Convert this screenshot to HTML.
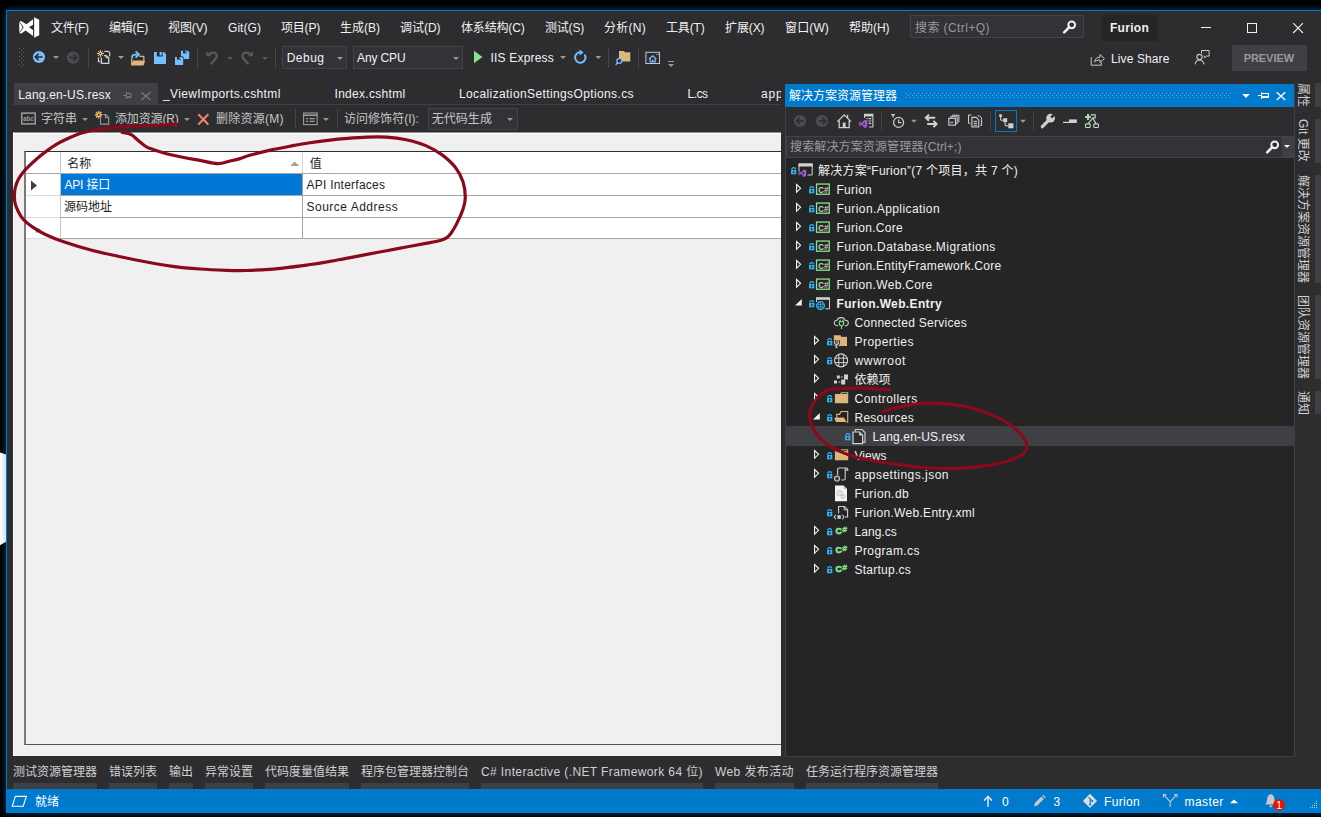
<!DOCTYPE html>
<html><head><meta charset="utf-8"><title>Furion - Microsoft Visual Studio</title>
<style>
*{box-sizing:border-box;margin:0;padding:0}
html,body{width:1321px;height:817px;overflow:hidden;background:#000}
body{position:relative;font-family:"Liberation Sans","Noto Sans CJK SC",sans-serif;font-size:12px;color:#f1f1f1;}
.a{position:absolute}
.t{position:absolute;white-space:nowrap;line-height:16px;height:16px}
.dim{color:#999}
.dark{color:#1e1e1e}
.b{font-weight:bold}
svg{position:absolute;overflow:visible}
#win{position:absolute;left:6px;top:10px;width:1330px;height:803px;background:#2d2d30;border:1px solid #007acc;box-shadow:0 0 7px 0 rgba(0,122,204,.5)}
.sep{position:absolute;width:1px;background:#46464a}
.combo{position:absolute;background:#333337;border:1px solid #434346}
.arr{position:absolute;width:0;height:0;border-left:3px solid transparent;border-right:3px solid transparent;border-top:3px solid #999}
.vt{position:absolute;left:1294.5px;width:16px;writing-mode:vertical-rl;text-orientation:sideways;white-space:nowrap;line-height:16px;color:#d0d0d0}
.vb{position:absolute;left:1315px;width:6px;background:#3f3f46}
.bb{position:absolute;top:783px;height:6px;background:#3f3f46}
</style></head>
<body>
<div id="win"></div>
<div class="a" style="left:0;top:452px;width:6px;height:94px;background:linear-gradient(90deg,#fdfeff,#eaf3fa 50%,#c9e1f3);clip-path:polygon(0 0.5px,100% 2.6px,100% 89.7px,0 93.2px)"></div>
<svg style="left:18.7px;top:16.6px" width="20.8" height="20.8" viewBox="0 0 20.8 20.8"><path fill="#fff" d="M2.1 4 L7.4 7.35 L14.05 2.2 V7.7 L10 10.3 L14.05 13 V18.9 L6.7 13.6 L2.3 16.5 L1 16.2 L0.26 14.15 V6.4 L0.8 4.6 Z M15.15 0.2 L20.2 2.75 V18.2 L15.15 20.8 Z"/><path fill="none" stroke="#2d2d30" stroke-width=".8" d="M1.2 5.6 L4 10.25 L1.2 14.9"/><path fill="#2d2d30" opacity=".6" d="M3.3 8.6 L4.6 10.25 L3.3 11.9 Z"/></svg>
<span class="t" style="left:51px;top:19.5px;letter-spacing:-0.326px;">文件(F)</span>
<span class="t" style="left:109px;top:19.5px;letter-spacing:-0.200px;">编辑(E)</span>
<span class="t" style="left:168px;top:19.5px;letter-spacing:-0.100px;">视图(V)</span>
<span class="t" style="left:228px;top:19.5px;letter-spacing:0.055px;">Git(G)</span>
<span class="t" style="left:281px;top:19.5px;letter-spacing:-0.200px;">项目(P)</span>
<span class="t" style="left:340px;top:19.5px;">生成(B)</span>
<span class="t" style="left:400px;top:19.5px;letter-spacing:-0.034px;">调试(D)</span>
<span class="t" style="left:461px;top:19.5px;letter-spacing:-0.167px;">体系结构(C)</span>
<span class="t" style="left:545px;top:19.5px;letter-spacing:-0.200px;">测试(S)</span>
<span class="t" style="left:604px;top:19.5px;letter-spacing:0.266px;">分析(N)</span>
<span class="t" style="left:666px;top:19.5px;letter-spacing:-0.166px;">工具(T)</span>
<span class="t" style="left:725px;top:19.5px;letter-spacing:-0.100px;">扩展(X)</span>
<span class="t" style="left:785px;top:19.5px;letter-spacing:0.134px;">窗口(W)</span>
<span class="t" style="left:849px;top:19.5px;letter-spacing:-0.034px;">帮助(H)</span>
<div class="combo" style="left:910px;top:15px;width:174px;height:23px;background:#333337;border-color:#434346"></div>
<span class="t dim" style="left:915px;top:19.5px;letter-spacing:0.423px;">搜索 (Ctrl+Q)</span>
<svg style="left:1062.6px;top:20.2px" width="13.5" height="13.5" viewBox="0 0 13.5 13.5"><circle cx="8.7" cy="4.8" r="3.4" fill="none" stroke="#f1f1f1" stroke-width="2"/><path d="M6.3 7.2 L1.2 12.3" stroke="#f1f1f1" stroke-width="2.6" stroke-linecap="round"/></svg>
<div class="a" style="left:1102px;top:15px;width:56px;height:26px;background:#252526"></div>
<span class="t b" style="left:1110px;top:19.5px;letter-spacing:0.279px;">Furion</span>
<svg style="left:1195px;top:18px" width="115" height="20" viewBox="0 0 115 20"><path d="M6 9.5 h10" stroke="#f1f1f1" stroke-width="1" fill="none"/><rect x="52.5" y="5.5" width="9" height="9" stroke="#f1f1f1" stroke-width="1" fill="none"/><path d="M98.2 5.2 L108 15 M108 5.2 L98.2 15" stroke="#f1f1f1" stroke-width="1.1" fill="none"/></svg>
<svg style="left:19px;top:48px" width="5" height="20" viewBox="0 0 5 20"><g fill="#5c5c61"><rect x="0" y="0" width="1" height="1"/><rect x="4" y="0" width="1" height="1"/><rect x="2" y="2" width="1" height="1"/><rect x="0" y="4" width="1" height="1"/><rect x="4" y="4" width="1" height="1"/><rect x="2" y="6" width="1" height="1"/><rect x="0" y="8" width="1" height="1"/><rect x="4" y="8" width="1" height="1"/><rect x="2" y="10" width="1" height="1"/><rect x="0" y="12" width="1" height="1"/><rect x="4" y="12" width="1" height="1"/><rect x="2" y="14" width="1" height="1"/><rect x="0" y="16" width="1" height="1"/><rect x="4" y="16" width="1" height="1"/><rect x="2" y="18" width="1" height="1"/></g></svg><svg style="left:0px;top:0px" width="1321" height="80" viewBox="0 0 1321 80"><circle cx="39" cy="57" r="6.1" fill="#75beff"/><path d="M35.2 57 h7.4 M38.6 53.8 L35.3 57 L38.6 60.2" stroke="#2d2d30" stroke-width="1.7" fill="none"/><path d="M53 56 h6 l-3 3 z" fill="#999"/><circle cx="73" cy="57.6" r="6.1" fill="#4d4d51"/><path d="M69.4 57.6 h7.4 M73.4 54.4 L76.7 57.6 L73.4 60.8" stroke="#2d2d30" stroke-width="1.7" fill="none"/><path d="M88.5 47 v21 M197.5 47 v21 M275.5 47 v21 M608.5 47 v21 M638.5 47 v21" stroke="#46464a" stroke-width="1"/><path d="M104.3 51.4 H108.3 L109.7 52.8 V56.2" stroke="#d0d0d0" stroke-width="1.2" fill="none"/><path d="M101.4 57.4 V63.4 H108.7 V57.6 L106.1 55.7 H104" stroke="#d0d0d0" stroke-width="1.3" fill="#2d2d30"/><path d="M106 55.800 V57.800 H108.600" stroke="#d0d0d0" stroke-width="1" fill="none"/><path d="M98.5 57.2 V61.6 H100.2" stroke="#d0d0d0" stroke-width="1.2" fill="none"/><g stroke="#f5cf8a" stroke-width="1"><path d="M100.4 49.9 v7.2 M96.800 53.5 h7.200 M97.900 51 l5 5 M102.900 51 l-5 5"/></g><circle cx="100.4" cy="53.5" r="1.600" fill="#f5cf8a"/><circle cx="100.4" cy="53.5" r=".800" fill="#2d2d30"/><path d="M118 56 h6 l-3 3 z" fill="#a0a0a0"/><path d="M139.400 56.400 h4.400 v4" stroke="#dcb67a" stroke-width="1.2" fill="none"/><path d="M131.700 59 V65" stroke="#dcb67a" stroke-width="1.300"/><path d="M133 60.600 H145.200 L143.500 65.500 H131.100 Z" fill="#dcb67a"/><path d="M132.600 58.600 c-1.600 -2.600 0 -3.900 3.400 -3.900 h2.400" stroke="#75beff" stroke-width="1.800" fill="none"/><path d="M135.600 51.300 l3.500 3.200 l-3.500 3.200" stroke="#75beff" stroke-width="1.800" fill="none"/><path d="M154 52 h10 l2 2 v10 h-12 z" fill="#75beff"/><rect x="156.800" y="51.500" width="5.900" height="5" fill="#2d2d30"/><rect x="159.600" y="52" width="2.200" height="3.400" fill="#75beff"/><path d="M181 50.8 h7 l1.2 1.2 v7 h-8.2 z" fill="#75beff"/><rect x="183" y="50.8" width="3.6" height="2.6" fill="#2d2d30"/><rect x="185.4" y="50.8" width="1.2" height="1.8" fill="#75beff"/><path d="M174.2 56.2 h8.2 l1.4 1.4 v8.2 h-9.6 z" fill="#2d2d30"/><path d="M175 57 h7 l1.2 1.2 v6.8 h-8.2 z" fill="#75beff"/><rect x="177" y="57" width="3.6" height="2.6" fill="#2d2d30"/><rect x="179.4" y="57" width="1.2" height="1.8" fill="#75beff"/><path d="M206.2 51 v5.2 h5.2 z" fill="#59595d"/><path d="M208 55.5 c2.5 -3.5 7 -3.8 8.6 -1 c1.2 2.2 -0.3 4.2 -6 9.8" stroke="#59595d" stroke-width="2.2" fill="none"/><path d="M227 57 h6 l-3 3 z" fill="#59595d"/><path d="M253 51 v5.2 h-5.2 z" fill="#59595d"/><path d="M251.2 55.5 c-2.5 -3.5 -7 -3.8 -8.6 -1 c-1.2 2.2 0.3 4.2 6 9.8" stroke="#59595d" stroke-width="2.2" fill="none"/><path d="M262 57 h6 l-3 3 z" fill="#59595d"/><path d="M474 50.8 L482.4 57 L474 63.2 z" fill="#8ae28a"/><path d="M560 56 h6 l-3 3 z" fill="#999"/><path d="M584.6 54.6 a5.2 5.2 0 1 1 -4.2 -2.3" stroke="#75beff" stroke-width="2" fill="none"/><path d="M579.6 49.4 l4 3 l-4 3 z" fill="#75beff"/><path d="M595.3 56 h6 l-3 3 z" fill="#999"/><path d="M619 51 h5 l1 1.2 h5.3 v9.3 h-11.3 z" fill="#dcb67a"/><circle cx="619.4" cy="60.8" r="2.5" fill="#2d2d30" stroke="#75beff" stroke-width="1.3"/><path d="M617.6 62.8 l-1.9 2" stroke="#75beff" stroke-width="1.5"/><rect x="645.9" y="52.3" width="13.6" height="11.2" fill="none" stroke="#c8c8c8" stroke-width="1"/><path d="M656.3 54.5 h.9 M657.8 54.5 h.9" stroke="#c8c8c8" stroke-width="1"/><path d="M649 59 l3.7 -3.3 l3.7 3.3 M650.2 58.6 v3.2 h5 v-3.2" stroke="#75beff" stroke-width="1.2" fill="none"/><rect x="652" y="59.6" width="1.4" height="2.2" fill="#75beff"/><path d="M668 61.5 h6" stroke="#999" stroke-width="1"/><path d="M668 64 h6 l-3 3 z" fill="#999"/><path d="M1091.2 57.2 v8 h10.2 v-2.4" stroke="#c8c8c8" stroke-width="1" fill="none"/><path d="M1094.6 62 c.4 -3.2 2.2 -4.8 5.4 -4.8 v-2.6 l4.4 4 l-4.4 4 v-2.6 c-2.4 0 -4 .4 -5.4 2 z" stroke="#c8c8c8" stroke-width="1" fill="none"/><circle cx="1199.5" cy="57" r="2.6" stroke="#c8c8c8" stroke-width="1.1" fill="none"/><path d="M1195 64.4 c.6 -3.2 2.2 -4.4 4.5 -4.4 s3.9 1.2 4.5 4.4" stroke="#c8c8c8" stroke-width="1.1" fill="none"/><path d="M1201.5 53.4 v-2.9 h7.6 v5.6 h-2.6 l-1.8 1.8 v-1.8 h-1" stroke="#c8c8c8" stroke-width="1" fill="none"/></svg>
<div class="combo" style="left:282px;top:46px;width:65px;height:23px"></div>
<span class="t" style="left:286.7px;top:50px;letter-spacing:0.485px;">Debug</span>
<div class="arr" style="left:337px;top:57px;border-top-color:#999"></div>
<div class="combo" style="left:353px;top:46px;width:110px;height:23px"></div>
<span class="t" style="left:357px;top:50px;letter-spacing:-0.123px;">Any CPU</span>
<div class="arr" style="left:453px;top:57px;border-top-color:#999"></div>
<span class="t" style="left:490.5px;top:50px;letter-spacing:0.195px;">IIS Express</span>
<span class="t" style="left:1111px;top:51px;letter-spacing:0.113px;">Live Share</span>
<div class="a" style="left:1232px;top:45px;width:75px;height:26px;background:#3f3f46"></div>
<span class="t b" style="left:1243.7px;top:50px;font-size:11px;letter-spacing:-0.062px;color:#9a9a9c">PREVIEW</span>
<div class="a" style="left:14px;top:83px;width:144px;height:22px;background:#3f3f46"></div>
<div class="a" style="left:13px;top:104px;width:768px;height:1px;background:#3f3f46"></div>
<span class="t" style="left:18.25px;top:86.5px;letter-spacing:0.177px;">Lang.en-US.resx</span>
<svg style="left:120px;top:88px" width="34" height="16" viewBox="0 0 34 16"><path d="M3 7.4 h3.400 M6.400 4 v7 M6.400 5.300 h4.500 v4.300 h-4.500 M6.400 8.800 h4.500" stroke="#7a7a7e" stroke-width="1" fill="none"/><path d="M21.300 4.200 L30.600 12 M30.600 4.200 L21.300 12" stroke="#7a7a7e" stroke-width="1.2" fill="none"/></svg>
<span class="t" style="left:163px;top:86px;letter-spacing:0.380px;">_ViewImports.cshtml</span>
<span class="t" style="left:334.5px;top:86px;letter-spacing:0.303px;">Index.cshtml</span>
<span class="t" style="left:459px;top:86px;letter-spacing:0.385px;">LocalizationSettingsOptions.cs</span>
<span class="t" style="left:687.5px;top:86px;letter-spacing:-0.504px;">L.cs</span>
<div class="a" style="left:761px;top:84px;width:20px;height:20px;overflow:hidden"><span class="t" style="left:0px;top:2px;letter-spacing:0.823px;">app</span></div>
<svg style="left:0px;top:0px" width="400" height="140" viewBox="0 0 400 140"><rect x="21.800" y="113.100" width="13.400" height="10.800" fill="none" stroke="#a4a4a4" stroke-width="1.400"/><text x="23.2" y="121.4" font-size="6.3" font-weight="bold" fill="#9a9a9a" font-family="Liberation Sans,sans-serif" textLength="10.6" lengthAdjust="spacingAndGlyphs">abc</text><g stroke="#f0b862" stroke-width="1.4"><path d="M98.7 110.9 v7.6 M94.9 114.7 h7.6 M96 112 l5.4 5.4 M101.4 112 l-5.4 5.4"/></g><circle cx="98.7" cy="114.7" r="1" fill="#2d2d30"/><path d="M100.5 118.3 v5.8 h8.2 v-6.6 l-3 -3 h-2.2 M105.4 114.8 v3 h3" stroke="#9a9a9a" stroke-width="1.1" fill="none"/><path d="M198.3 114.3 L208.3 124.6 M208.3 114.3 L198.3 124.6" stroke="#f2826c" stroke-width="2.1" fill="none"/><rect x="303.6" y="113" width="13.6" height="11.6" fill="none" stroke="#9c9c9c" stroke-width="1.1"/><path d="M303.6 115.2 h13.6" stroke="#9c9c9c" stroke-width="1.6"/><path d="M306 118.6 h2 M309.4 118.6 h5.4 M306 121.4 h2 M309.4 121.4 h5.4" stroke="#9c9c9c" stroke-width="1.2"/></svg>
<span class="t" style="left:41px;top:110.5px;letter-spacing:-0.005px;color:#c6c6c6">字符串</span>
<div class="arr" style="left:82px;top:118px;border-top-color:#999"></div>
<span class="t" style="left:115px;top:110.5px;letter-spacing:-0.139px;color:#c6c6c6">添加资源(R)</span>
<div class="arr" style="left:184px;top:118px;border-top-color:#999"></div>
<span class="t" style="left:216px;top:110.5px;letter-spacing:0.243px;color:#c6c6c6">删除资源(M)</span>
<div class="sep" style="left:295px;top:109px;height:19px"></div>
<div class="arr" style="left:323px;top:118px;border-top-color:#999"></div>
<div class="sep" style="left:337px;top:109px;height:19px"></div>
<span class="t" style="left:344px;top:110.5px;letter-spacing:0.036px;color:#c6c6c6">访问修饰符(I):</span>
<div class="combo" style="left:428px;top:108px;width:90px;height:22px;background:#333337"></div>
<span class="t" style="left:431.7px;top:110.5px;letter-spacing:0.057px;color:#c6c6c6">无代码生成</span>
<div class="arr" style="left:507px;top:118px;border-top-color:#999"></div>
<div class="a" style="left:13px;top:132px;width:768px;height:624px;background:#f0f0f0;border-top:1px solid #8e8e8f;border-left:1px solid #fff"></div>
<div class="a" style="left:13px;top:133px;width:768px;height:1px;background:#fff"></div>
<div class="a" style="left:24px;top:151px;width:757px;height:594px;border:1px solid #555;border-top-color:#303030;border-left:2px solid #7a7a7a;border-right:0"></div>
<div class="a" style="left:26px;top:152px;width:755px;height:87px;background:#fff"></div>
<div class="a" style="left:26px;top:173px;width:755px;height:1px;background:#a6a6a6"></div>
<div class="a" style="left:26px;top:195px;width:35px;height:1px;background:#dcdcdc"></div>
<div class="a" style="left:61px;top:195px;width:720px;height:1px;background:#a6a6a6"></div>
<div class="a" style="left:26px;top:217px;width:35px;height:1px;background:#dcdcdc"></div>
<div class="a" style="left:61px;top:217px;width:720px;height:1px;background:#a6a6a6"></div>
<div class="a" style="left:26px;top:238px;width:35px;height:1px;background:#dcdcdc"></div>
<div class="a" style="left:61px;top:238px;width:720px;height:1px;background:#a6a6a6"></div>
<div class="a" style="left:60px;top:152px;width:1px;height:87px;background:#c4c4c4"></div>
<div class="a" style="left:302px;top:152px;width:1px;height:21px;background:#d4d4d4"></div>
<div class="a" style="left:302px;top:174px;width:1px;height:65px;background:#a6a6a6"></div>
<div class="a" style="left:61px;top:174px;width:241px;height:21px;background:#0078d7"></div>
<span class="t dark" style="left:67.2px;top:155.5px;letter-spacing:-0.008px;">名称</span>
<span class="t dark" style="left:309.8px;top:155.5px;letter-spacing:-0.016px;">值</span>
<span class="t" style="left:64.5px;top:177.2px;letter-spacing:-0.198px;color:#fff">API 接口</span>
<span class="t dark" style="left:306.5px;top:177.2px;letter-spacing:0.238px;">API Interfaces</span>
<span class="t dark" style="left:64px;top:199.2px;">源码地址</span>
<span class="t dark" style="left:306.5px;top:199.2px;letter-spacing:0.499px;">Source Address</span>
<svg style="left:0px;top:0px" width="400" height="260" viewBox="0 0 400 260"><path d="M31 180.5 L37 185.5 L31 190.5 z" fill="#404040"/><path d="M290.2 166 h9 l-4.5 -4.5 z" fill="#a0a0a0"/><text x="35.2" y="236.5" font-size="13" font-weight="bold" fill="#404040" font-family="Liberation Sans,sans-serif">*</text></svg>
<div class="a" style="left:785px;top:84px;width:510px;height:673px;background:#252526;border:1px solid #3f3f46;border-top:0"></div>
<div class="a" style="left:785px;top:84px;width:509px;height:23px;background:#007acc"></div>
<span class="t" style="left:789px;top:87.5px;color:#fff">解决方案资源管理器</span>
<svg style="left:0px;top:0px" width="1321" height="110" viewBox="0 0 1321 110"><path d="M906 93.5 H1232" stroke="#5aaee6" stroke-width="1" stroke-dasharray="1 3"/><path d="M908 95.5 H1232" stroke="#5aaee6" stroke-width="1" stroke-dasharray="1 3"/><path d="M906 97.5 H1232" stroke="#5aaee6" stroke-width="1" stroke-dasharray="1 3"/><path d="M1242.2 94 h7.6 l-3.8 4 z" fill="#fff"/><path d="M1258 95.5 h3.4 M1261.6 92.3 v6.6 M1261.6 93.5 h6.8 v3.9 h-6.8 M1261.6 96.6 h6.8" stroke="#fff" stroke-width="1.1" fill="none"/><path d="M1276.8 92.2 L1285.2 99.9 M1285.2 92.2 L1276.8 99.9" stroke="#fff" stroke-width="1.4" fill="none"/></svg>
<div class="a" style="left:786px;top:107px;width:508px;height:29px;background:#2d2d30"></div>
<svg style="left:0px;top:0px" width="1321" height="140" viewBox="0 0 1321 140"><circle cx="800" cy="121" r="6.1" fill="#4d4d51"/><path d="M796.4 121 h7.4 M799.8 117.8 L796.5 121 L799.8 124.2" stroke="#2d2d30" stroke-width="1.7" fill="none"/><circle cx="822" cy="121" r="6.1" fill="#4d4d51"/><path d="M818.4 121 h7.4 M822.4 117.8 L825.7 121 L822.4 124.2" stroke="#2d2d30" stroke-width="1.7" fill="none"/><path d="M837.4 121.6 L844.2 114.8 L851 121.6 M839.2 120.4 v7.2 h10 v-7.2 M847.6 117.6 v-2.8" stroke="#d0d0d0" stroke-width="1.3" fill="none"/><rect x="842.8" y="122.6" width="2.8" height="5" fill="#d0d0d0"/><path d="M864.5 118 v-3.6 h8.4 v12.6 h-4" stroke="#d0d0d0" stroke-width="1.1" fill="none"/><path d="M864.5 115.4 h8.4" stroke="#d0d0d0" stroke-width="2"/><path d="M866.5 118.6 h1 M868.6 118.6 h2.6 M866.5 121 h1 M868.6 121 h2.6 M868.6 123.4 h2.6" stroke="#d0d0d0" stroke-width="1.1"/><g transform="translate(859 119.8) scale(1.02)"><path fill="#9b5bd6" fill-rule="evenodd" d="M5.6 0 L8 1 V7 L5.6 8 L2.5 4.9 L0.9 6.1 L0 5.6 V2.4 L0.9 1.9 L2.5 3.1 Z M5.7 2.4 L3.7 4 L5.7 5.6 Z M0.9 3.1 L1.8 4 L0.9 4.9 Z"/></g><path d="M881.5 111 v20 M990.5 111 v20 M1033.5 111 v20" stroke="#46464a" stroke-width="1"/><circle cx="898.6" cy="122.4" r="5" fill="none" stroke="#d0d0d0" stroke-width="1.2"/><path d="M898.6 119.4 v3.2 h2.8" stroke="#d0d0d0" stroke-width="1.1" fill="none"/><path d="M890.8 114 h4.6 l-1.7 2 v1.6 h-1.2 v-1.6 z" fill="#d0d0d0"/><path d="M911 119.8 h6 l-3 3 z" fill="#999"/><path d="M926.400 117.700 h8.800 M929 114.600 l-3.200 3.100 l3.200 3.100" stroke="#d0d0d0" stroke-width="2" fill="none"/><path d="M927.200 124 h8.800 M933.400 120.900 l3.200 3.100 l-3.200 3.100" stroke="#d0d0d0" stroke-width="2" fill="none"/><path d="M952.300 116.200 v-1 h6.600 v6.600 h-1.200 M950.600 117.900 v-1.200 h6.600 v6.800 h-1.200" stroke="#d0d0d0" stroke-width="1" fill="none"/><rect x="948.800" y="118.300" width="6.700" height="6.800" fill="none" stroke="#d0d0d0" stroke-width="1.1"/><path d="M950.200 122.400 h3.200" stroke="#75beff" stroke-width="1.300"/><path d="M971.400 115 h-2.900 v8.300 h2 M977.600 115.600 c2.800 .2 4 1.400 4 3.800 v6 h-1.400" stroke="#d0d0d0" stroke-width="1" fill="none"/><path d="M971.900 117.400 h4.400 l2.500 2.500 v7.100 h-6.900 z" stroke="#d0d0d0" stroke-width="1.1" fill="#2d2d30"/><path d="M973.600 121.300 h3.600 M973.600 123.300 h3.600 M973.600 125.300 h3.600" stroke="#d0d0d0" stroke-width="1"/><rect x="995.5" y="110.5" width="21" height="21" fill="none" stroke="#007acc" stroke-width="1"/><rect x="999.200" y="114.300" width="2.800" height="2.700" fill="#d0d0d0"/><rect x="1003.200" y="118.200" width="4" height="4" fill="#d0d0d0"/><rect x="1008.300" y="123.300" width="5.100" height="5" fill="#d0d0d0"/><path d="M1000.600 117 v3.200 h2.600 M1005.200 122.200 v3.600 h3.100" stroke="#d0d0d0" stroke-width="1" fill="none"/><path d="M1020 119.8 h6 l-3 3 z" fill="#999"/><path d="M1042.300 126.700 L1049.400 119.600" stroke="#d0d0d0" stroke-width="3.2" stroke-linecap="round"/><circle cx="1050.600" cy="118.100" r="4.400" fill="#d0d0d0"/><path d="M1051.200 117.500 L1054.600 114.100" stroke="#2d2d30" stroke-width="2.600"/><path d="M1063 122.4 h7" stroke="#d0d0d0" stroke-width="1.2"/><rect x="1069" y="119.4" width="7.8" height="3.6" fill="#d0d0d0"/><path d="M1090.800 114.900 h4.400 v3 h-3" stroke="#d0d0d0" stroke-width="1.1" fill="none"/><rect x="1085.600" y="123.900" width="4.600" height="3.600" rx=".8" fill="none" stroke="#d0d0d0" stroke-width="1.1"/><rect x="1093.800" y="123.900" width="4.600" height="3.600" rx=".8" fill="none" stroke="#d0d0d0" stroke-width="1.1"/><path d="M1092.800 118.200 l-4.800 5.400 M1092.800 118.200 l3.200 5.400" stroke="#d0d0d0" stroke-width="1.1" fill="none"/><path d="M1088 114.100 v5.800 M1085.100 117 h5.800" stroke="#9be89b" stroke-width="2"/></svg>
<div class="a" style="left:786px;top:136px;width:508px;height:22px;background:#333337;border:1px solid #434346"></div>
<span class="t dim" style="left:790px;top:138.5px;letter-spacing:0.137px;">搜索解决方案资源管理器(Ctrl+;)</span>
<div class="a" style="left:1282px;top:137px;width:12px;height:20px;background:#3f3f46"></div><svg style="left:1265.8px;top:139.8px" width="13.5" height="13.5" viewBox="0 0 13.5 13.5"><circle cx="8.7" cy="4.8" r="3.4" fill="none" stroke="#f1f1f1" stroke-width="2"/><path d="M6.3 7.2 L1.2 12.3" stroke="#f1f1f1" stroke-width="2.6" stroke-linecap="round"/></svg><svg style="left:1284px;top:145px" width="6" height="3" viewBox="0 0 6 3"><path d="M0 0 h6 l-3 3 z" fill="#f1f1f1"/></svg>
<span class="t" style="left:818px;top:162.5px;letter-spacing:0.266px;">解决方案“Furion”(7 个项目，共 7 个)</span>
<svg style="left:790.5px;top:166.8px" width="5.3" height="7.3" viewBox="0 0 5.3 7.3"><path d="M0.75 2.5 a1.9 1.85 0 0 1 3.8 0" fill="none" stroke="#2eb1f0" stroke-width="1.3"/><rect x="0" y="3" width="5.3" height="4.3" fill="#2eb1f0"/><rect x="1.95" y="4.2" width="1.4" height="1.9" fill="#252526"/></svg>
<svg style="left:797.5px;top:162.5px" width="16" height="16" viewBox="0 0 16 16"><path d="M1 8.3 V1 H14.2 V12 H9.6" fill="none" stroke="#d0d0d0" stroke-width="1"/><path d="M0.5 2 H14.7" stroke="#d0d0d0" stroke-width="3"/><g transform="translate(0.5 6.4) scale(0.96)"><path fill="#9b5bd6" fill-rule="evenodd" d="M5.6 0 L8 1 V7 L5.6 8 L2.5 4.9 L0.9 6.1 L0 5.6 V2.4 L0.9 1.9 L2.5 3.1 Z M5.7 2.4 L3.7 4 L5.7 5.6 Z M0.9 3.1 L1.8 4 L0.9 4.9 Z"/></g></svg>
<span class="t" style="left:836.5px;top:181.5px;letter-spacing:0.247px;">Furion</span>
<svg style="left:809px;top:185.8px" width="5.3" height="7.3" viewBox="0 0 5.3 7.3"><path d="M0.75 2.5 a1.9 1.85 0 0 1 3.8 0" fill="none" stroke="#2eb1f0" stroke-width="1.3"/><rect x="0" y="3" width="5.3" height="4.3" fill="#2eb1f0"/><rect x="1.95" y="4.2" width="1.4" height="1.9" fill="#252526"/></svg>
<svg style="left:816px;top:181.5px" width="16" height="16" viewBox="0 0 16 16"><rect x="0.55" y="2.05" width="12.7" height="10.2" fill="none" stroke="#8ae28a" stroke-width="1.3"/><text x="2.3" y="10.6" font-size="8.8" font-weight="bold" fill="#d0d0d0" font-family="Liberation Sans,sans-serif" textLength="10" lengthAdjust="spacingAndGlyphs">C#</text></svg>
<svg style="left:796px;top:182.8px" width="6" height="11" viewBox="0 0 6 11"><path d="M0.55 1.5 L4.6 5.35 L0.55 9.2 Z" fill="none" stroke="#f1f1f1" stroke-width="1.1"/></svg>
<span class="t" style="left:836.5px;top:200.5px;letter-spacing:0.413px;">Furion.Application</span>
<svg style="left:809px;top:204.8px" width="5.3" height="7.3" viewBox="0 0 5.3 7.3"><path d="M0.75 2.5 a1.9 1.85 0 0 1 3.8 0" fill="none" stroke="#2eb1f0" stroke-width="1.3"/><rect x="0" y="3" width="5.3" height="4.3" fill="#2eb1f0"/><rect x="1.95" y="4.2" width="1.4" height="1.9" fill="#252526"/></svg>
<svg style="left:816px;top:200.5px" width="16" height="16" viewBox="0 0 16 16"><rect x="0.55" y="2.05" width="12.7" height="10.2" fill="none" stroke="#8ae28a" stroke-width="1.3"/><text x="2.3" y="10.6" font-size="8.8" font-weight="bold" fill="#d0d0d0" font-family="Liberation Sans,sans-serif" textLength="10" lengthAdjust="spacingAndGlyphs">C#</text></svg>
<svg style="left:796px;top:201.8px" width="6" height="11" viewBox="0 0 6 11"><path d="M0.55 1.5 L4.6 5.35 L0.55 9.2 Z" fill="none" stroke="#f1f1f1" stroke-width="1.1"/></svg>
<span class="t" style="left:836.5px;top:219.5px;letter-spacing:0.286px;">Furion.Core</span>
<svg style="left:809px;top:223.8px" width="5.3" height="7.3" viewBox="0 0 5.3 7.3"><path d="M0.75 2.5 a1.9 1.85 0 0 1 3.8 0" fill="none" stroke="#2eb1f0" stroke-width="1.3"/><rect x="0" y="3" width="5.3" height="4.3" fill="#2eb1f0"/><rect x="1.95" y="4.2" width="1.4" height="1.9" fill="#252526"/></svg>
<svg style="left:816px;top:219.5px" width="16" height="16" viewBox="0 0 16 16"><rect x="0.55" y="2.05" width="12.7" height="10.2" fill="none" stroke="#8ae28a" stroke-width="1.3"/><text x="2.3" y="10.6" font-size="8.8" font-weight="bold" fill="#d0d0d0" font-family="Liberation Sans,sans-serif" textLength="10" lengthAdjust="spacingAndGlyphs">C#</text></svg>
<svg style="left:796px;top:220.8px" width="6" height="11" viewBox="0 0 6 11"><path d="M0.55 1.5 L4.6 5.35 L0.55 9.2 Z" fill="none" stroke="#f1f1f1" stroke-width="1.1"/></svg>
<span class="t" style="left:836.5px;top:238.5px;letter-spacing:0.454px;">Furion.Database.Migrations</span>
<svg style="left:809px;top:242.8px" width="5.3" height="7.3" viewBox="0 0 5.3 7.3"><path d="M0.75 2.5 a1.9 1.85 0 0 1 3.8 0" fill="none" stroke="#2eb1f0" stroke-width="1.3"/><rect x="0" y="3" width="5.3" height="4.3" fill="#2eb1f0"/><rect x="1.95" y="4.2" width="1.4" height="1.9" fill="#252526"/></svg>
<svg style="left:816px;top:238.5px" width="16" height="16" viewBox="0 0 16 16"><rect x="0.55" y="2.05" width="12.7" height="10.2" fill="none" stroke="#8ae28a" stroke-width="1.3"/><text x="2.3" y="10.6" font-size="8.8" font-weight="bold" fill="#d0d0d0" font-family="Liberation Sans,sans-serif" textLength="10" lengthAdjust="spacingAndGlyphs">C#</text></svg>
<svg style="left:796px;top:239.8px" width="6" height="11" viewBox="0 0 6 11"><path d="M0.55 1.5 L4.6 5.35 L0.55 9.2 Z" fill="none" stroke="#f1f1f1" stroke-width="1.1"/></svg>
<span class="t" style="left:836.5px;top:257.5px;letter-spacing:0.310px;">Furion.EntityFramework.Core</span>
<svg style="left:809px;top:261.8px" width="5.3" height="7.3" viewBox="0 0 5.3 7.3"><path d="M0.75 2.5 a1.9 1.85 0 0 1 3.8 0" fill="none" stroke="#2eb1f0" stroke-width="1.3"/><rect x="0" y="3" width="5.3" height="4.3" fill="#2eb1f0"/><rect x="1.95" y="4.2" width="1.4" height="1.9" fill="#252526"/></svg>
<svg style="left:816px;top:257.5px" width="16" height="16" viewBox="0 0 16 16"><rect x="0.55" y="2.05" width="12.7" height="10.2" fill="none" stroke="#8ae28a" stroke-width="1.3"/><text x="2.3" y="10.6" font-size="8.8" font-weight="bold" fill="#d0d0d0" font-family="Liberation Sans,sans-serif" textLength="10" lengthAdjust="spacingAndGlyphs">C#</text></svg>
<svg style="left:796px;top:258.8px" width="6" height="11" viewBox="0 0 6 11"><path d="M0.55 1.5 L4.6 5.35 L0.55 9.2 Z" fill="none" stroke="#f1f1f1" stroke-width="1.1"/></svg>
<span class="t" style="left:836.5px;top:276.5px;letter-spacing:0.336px;">Furion.Web.Core</span>
<svg style="left:809px;top:280.8px" width="5.3" height="7.3" viewBox="0 0 5.3 7.3"><path d="M0.75 2.5 a1.9 1.85 0 0 1 3.8 0" fill="none" stroke="#2eb1f0" stroke-width="1.3"/><rect x="0" y="3" width="5.3" height="4.3" fill="#2eb1f0"/><rect x="1.95" y="4.2" width="1.4" height="1.9" fill="#252526"/></svg>
<svg style="left:816px;top:276.5px" width="16" height="16" viewBox="0 0 16 16"><rect x="0.55" y="2.05" width="12.7" height="10.2" fill="none" stroke="#8ae28a" stroke-width="1.3"/><text x="2.3" y="10.6" font-size="8.8" font-weight="bold" fill="#d0d0d0" font-family="Liberation Sans,sans-serif" textLength="10" lengthAdjust="spacingAndGlyphs">C#</text></svg>
<svg style="left:796px;top:277.8px" width="6" height="11" viewBox="0 0 6 11"><path d="M0.55 1.5 L4.6 5.35 L0.55 9.2 Z" fill="none" stroke="#f1f1f1" stroke-width="1.1"/></svg>
<span class="t b" style="left:836.5px;top:295.5px;letter-spacing:0.357px;">Furion.Web.Entry</span>
<svg style="left:809px;top:299.8px" width="5.3" height="7.3" viewBox="0 0 5.3 7.3"><path d="M0.75 2.5 a1.9 1.85 0 0 1 3.8 0" fill="none" stroke="#2eb1f0" stroke-width="1.3"/><rect x="0" y="3" width="5.3" height="4.3" fill="#2eb1f0"/><rect x="1.95" y="4.2" width="1.4" height="1.9" fill="#252526"/></svg>
<svg style="left:816px;top:295.5px" width="16" height="16" viewBox="0 0 16 16"><path d="M0.5 6 V2 H13.5 V12.8 H9.2" fill="none" stroke="#d0d0d0" stroke-width="1"/><path d="M0 2.6 H14" stroke="#d0d0d0" stroke-width="2.4"/><circle cx="4.5" cy="9.6" r="4" fill="#252526" stroke="#2eb1f0" stroke-width="1.1"/><path d="M0.7 8.3 h7.6 M0.7 10.9 h7.6 M4.5 5.7 v7.8 M2.7 6.1 c-.8 2.4 -.8 4.6 0 7 M6.3 6.1 c.8 2.4 .8 4.6 0 7" stroke="#2eb1f0" stroke-width=".8" fill="none"/></svg>
<svg style="left:795px;top:299.2px" width="7" height="7" viewBox="0 0 7 7"><path d="M6.8 0 V6.6 H0 Z" fill="#f1f1f1"/></svg>
<span class="t" style="left:854.5px;top:314.5px;letter-spacing:0.289px;">Connected Services</span>
<svg style="left:834px;top:314.5px" width="16" height="16" viewBox="0 0 16 16"><g transform="translate(0 -0.6)"><path d="M4.2 11.4 c-2.8 0 -3.9 -1.4 -3.9 -2.9 c0 -1.6 1.2 -2.7 2.8 -2.7 c.4 -1.7 2 -2.6 4 -2.6 c2 0 3.4 1 3.9 2.6 c2 0 3.3 1.2 3.3 2.7 c0 1.6 -1.2 2.9 -3.6 2.9" fill="none" stroke="#d0d0d0" stroke-width="1.1"/><path d="M6.1 5.4 v2 M8.9 5.4 v2 M5.3 7.4 h4.4 v1.8 a2.2 2.2 0 0 1 -4.4 0 z M7.5 11.4 v3.1" stroke="#8ae28a" stroke-width="1.1" fill="#252526"/></g></svg>
<span class="t" style="left:854.5px;top:333.5px;letter-spacing:0.470px;">Properties</span>
<svg style="left:827px;top:337.8px" width="5.3" height="7.3" viewBox="0 0 5.3 7.3"><path d="M0.75 2.5 a1.9 1.85 0 0 1 3.8 0" fill="none" stroke="#2eb1f0" stroke-width="1.3"/><rect x="0" y="3" width="5.3" height="4.3" fill="#2eb1f0"/><rect x="1.95" y="4.2" width="1.4" height="1.9" fill="#252526"/></svg>
<svg style="left:834px;top:333.5px" width="16" height="16" viewBox="0 0 16 16"><path d="M-0.2 1.2 h6.8 l1 1.6 h5.4 v9.3 h-13.2 z" fill="#dcb67a"/><path d="M6.6 2.1 h5.4" stroke="#252526" stroke-width=".7"/><path d="M2.4 14.4 v-4.4 M0.5 6.3 v2.2 a1.9 1.9 0 0 0 3.8 0 v-2.2" fill="none" stroke="#252526" stroke-width="3.2"/><path d="M2.4 14.2 v-4" stroke="#c4c4c4" stroke-width="1.7"/><path d="M0.5 6.4 v2.100 a1.9 1.9 0 0 0 3.8 0 v-2.100" fill="none" stroke="#c4c4c4" stroke-width="1.4"/></svg>
<svg style="left:814px;top:334.8px" width="6" height="11" viewBox="0 0 6 11"><path d="M0.55 1.5 L4.6 5.35 L0.55 9.2 Z" fill="none" stroke="#f1f1f1" stroke-width="1.1"/></svg>
<span class="t" style="left:854.5px;top:352.5px;letter-spacing:0.702px;">wwwroot</span>
<svg style="left:827px;top:356.8px" width="5.3" height="7.3" viewBox="0 0 5.3 7.3"><path d="M0.75 2.5 a1.9 1.85 0 0 1 3.8 0" fill="none" stroke="#2eb1f0" stroke-width="1.3"/><rect x="0" y="3" width="5.3" height="4.3" fill="#2eb1f0"/><rect x="1.95" y="4.2" width="1.4" height="1.9" fill="#252526"/></svg>
<svg style="left:834px;top:352.5px" width="16" height="16" viewBox="0 0 16 16"><circle cx="7.1" cy="7.4" r="6.5" fill="none" stroke="#d0d0d0" stroke-width="1.1"/><path d="M0.6 5.2 h13 M0.6 9.6 h13 M4.8 1.3 v12.2 M9.4 1.3 v12.2" stroke="#d0d0d0" stroke-width="1" fill="none"/></svg>
<svg style="left:814px;top:353.8px" width="6" height="11" viewBox="0 0 6 11"><path d="M0.55 1.5 L4.6 5.35 L0.55 9.2 Z" fill="none" stroke="#f1f1f1" stroke-width="1.1"/></svg>
<span class="t" style="left:854.5px;top:371.5px;letter-spacing:-0.005px;">依赖项</span>
<svg style="left:834px;top:371.5px" width="16" height="16" viewBox="0 0 16 16"><rect x="2.8" y="3.500" width="3" height="3" fill="#d0d0d0"/><rect x="6.8" y="4.5" width="2" height="1" fill="#d0d0d0"/><rect x="10" y="2.5" width="4" height="5" fill="#d0d0d0"/><rect x="0" y="8.5" width="3" height="3" fill="#d0d0d0"/><rect x="4.4" y="9.5" width="2" height="1" fill="#d0d0d0"/><rect x="7.2" y="7.5" width="4" height="5" fill="#d0d0d0"/></svg>
<svg style="left:814px;top:372.8px" width="6" height="11" viewBox="0 0 6 11"><path d="M0.55 1.5 L4.6 5.35 L0.55 9.2 Z" fill="none" stroke="#f1f1f1" stroke-width="1.1"/></svg>
<span class="t" style="left:854.5px;top:390.5px;letter-spacing:0.470px;">Controllers</span>
<svg style="left:827px;top:394.8px" width="5.3" height="7.3" viewBox="0 0 5.3 7.3"><path d="M0.75 2.5 a1.9 1.85 0 0 1 3.8 0" fill="none" stroke="#2eb1f0" stroke-width="1.3"/><rect x="0" y="3" width="5.3" height="4.3" fill="#2eb1f0"/><rect x="1.95" y="4.2" width="1.4" height="1.9" fill="#252526"/></svg>
<svg style="left:834px;top:390.5px" width="16" height="16" viewBox="0 0 16 16"><path d="M0.9 3.1 h5.2 l1.2 -1.8 h6.9 v11 h-13.3 z" fill="#dcb67a"/><path d="M7.6 2.5 h5.6" stroke="#252526" stroke-width=".8"/></svg>
<svg style="left:814px;top:391.8px" width="6" height="11" viewBox="0 0 6 11"><path d="M0.55 1.5 L4.6 5.35 L0.55 9.2 Z" fill="none" stroke="#f1f1f1" stroke-width="1.1"/></svg>
<span class="t" style="left:854.5px;top:409.5px;letter-spacing:0.227px;">Resources</span>
<svg style="left:827px;top:413.8px" width="5.3" height="7.3" viewBox="0 0 5.3 7.3"><path d="M0.75 2.5 a1.9 1.85 0 0 1 3.8 0" fill="none" stroke="#2eb1f0" stroke-width="1.3"/><rect x="0" y="3" width="5.3" height="4.3" fill="#2eb1f0"/><rect x="1.95" y="4.2" width="1.4" height="1.9" fill="#252526"/></svg>
<svg style="left:834px;top:409.5px" width="16" height="16" viewBox="0 0 16 16"><path d="M2.7 8.4 V4.4 H5.6 l1.4 -2.9 h6.7 v10.600 h-1.2" fill="none" stroke="#dcb67a" stroke-width="1.1"/><path d="M0.3 8.200 L2 7.5 H10 L12.4 12.100 H2 Z" fill="#dcb67a"/></svg>
<svg style="left:813px;top:413.2px" width="7" height="7" viewBox="0 0 7 7"><path d="M6.8 0 V6.6 H0 Z" fill="#f1f1f1"/></svg>
<div class="a" style="left:786px;top:426px;width:508px;height:20px;background:#3f3f46"></div>
<span class="t" style="left:872.5px;top:428.5px;letter-spacing:0.157px;">Lang.en-US.resx</span>
<svg style="left:845px;top:432.8px" width="5.3" height="7.3" viewBox="0 0 5.3 7.3"><path d="M0.75 2.5 a1.9 1.85 0 0 1 3.8 0" fill="none" stroke="#2eb1f0" stroke-width="1.3"/><rect x="0" y="3" width="5.3" height="4.3" fill="#2eb1f0"/><rect x="1.95" y="4.2" width="1.4" height="1.9" fill="#252526"/></svg>
<svg style="left:852px;top:428.5px" width="16" height="16" viewBox="0 0 16 16"><path d="M3.4 2.500 v-2 h6.6 l3 3 v9.600 h-2" fill="none" stroke="#d0d0d0" stroke-width="1.1"/><path d="M1 3 h6.400 l3.200 3.200 v8.400 h-9.600 z" fill="#2d2d30" stroke="#d0d0d0" stroke-width="1.2"/><path d="M7.200 3 v3.400 h3.400 z" fill="#d0d0d0"/></svg>
<span class="t" style="left:854.5px;top:447.5px;letter-spacing:0.081px;">Views</span>
<svg style="left:827px;top:451.8px" width="5.3" height="7.3" viewBox="0 0 5.3 7.3"><path d="M0.75 2.5 a1.9 1.85 0 0 1 3.8 0" fill="none" stroke="#2eb1f0" stroke-width="1.3"/><rect x="0" y="3" width="5.3" height="4.3" fill="#2eb1f0"/><rect x="1.95" y="4.2" width="1.4" height="1.9" fill="#252526"/></svg>
<svg style="left:834px;top:447.5px" width="16" height="16" viewBox="0 0 16 16"><path d="M0.9 3.1 h5.2 l1.2 -1.8 h6.9 v11 h-13.3 z" fill="#dcb67a"/><path d="M7.6 2.5 h5.6" stroke="#252526" stroke-width=".8"/></svg>
<svg style="left:814px;top:448.8px" width="6" height="11" viewBox="0 0 6 11"><path d="M0.55 1.5 L4.6 5.35 L0.55 9.2 Z" fill="none" stroke="#f1f1f1" stroke-width="1.1"/></svg>
<span class="t" style="left:854.5px;top:466.5px;letter-spacing:0.485px;">appsettings.json</span>
<svg style="left:827px;top:470.8px" width="5.3" height="7.3" viewBox="0 0 5.3 7.3"><path d="M0.75 2.5 a1.9 1.85 0 0 1 3.8 0" fill="none" stroke="#2eb1f0" stroke-width="1.3"/><rect x="0" y="3" width="5.3" height="4.3" fill="#2eb1f0"/><rect x="1.95" y="4.2" width="1.4" height="1.9" fill="#252526"/></svg>
<svg style="left:834px;top:466.5px" width="16" height="16" viewBox="0 0 16 16"><path d="M3.6 8 V2.500 a1.5 1.5 0 0 1 1.5 -1.500 H12.6 a1.200 1.200 0 0 1 1.200 1.200 v.900 h-2.600 M11.200 1 V11.500 a1.500 1.500 0 0 1 -1.500 1.500 H7.200" fill="none" stroke="#d0d0d0" stroke-width="1.1"/><circle cx="3" cy="11.600" r="2.500" fill="#3a3a3c" stroke="#bdbdbd" stroke-width="1.3"/></svg>
<svg style="left:814px;top:467.8px" width="6" height="11" viewBox="0 0 6 11"><path d="M0.55 1.5 L4.6 5.35 L0.55 9.2 Z" fill="none" stroke="#f1f1f1" stroke-width="1.1"/></svg>
<span class="t" style="left:854.5px;top:485.5px;letter-spacing:0.433px;">Furion.db</span>
<svg style="left:834px;top:485.5px" width="16" height="16" viewBox="0 0 16 16"><path d="M1 -0.400 h8.600 l3.400 3.400 v12.200 h-12 z" fill="#f4f4f4"/><path d="M9.400 -0.400 v3.600 h3.600 z" fill="#cfcfcf"/><circle cx="5.600" cy="7.200" r="2.700" fill="none" stroke="#b9b9b9" stroke-width=".9"/><circle cx="5.600" cy="7.200" r="1" fill="none" stroke="#c8c8c8" stroke-width=".7"/><circle cx="9" cy="10.600" r="1.900" fill="#dfeefa" stroke="#8cc8f4" stroke-width=".9"/></svg>
<span class="t" style="left:854.5px;top:504.5px;letter-spacing:0.312px;">Furion.Web.Entry.xml</span>
<svg style="left:827px;top:508.8px" width="5.3" height="7.3" viewBox="0 0 5.3 7.3"><path d="M0.75 2.5 a1.9 1.85 0 0 1 3.8 0" fill="none" stroke="#2eb1f0" stroke-width="1.3"/><rect x="0" y="3" width="5.3" height="4.3" fill="#2eb1f0"/><rect x="1.95" y="4.2" width="1.4" height="1.9" fill="#252526"/></svg>
<svg style="left:834px;top:504.5px" width="16" height="16" viewBox="0 0 16 16"><path d="M4.600 8.400 V1.500 h5.800 l3.200 3.200 v7.300 h-2.600" fill="none" stroke="#d0d0d0" stroke-width="1.1"/><path d="M10.200 1.500 v3.400 h3.400" fill="none" stroke="#d0d0d0" stroke-width="1"/><path d="M1.800 9.800 L0.200 12 L1.800 14.200 M8.400 9.800 L10 12 L8.400 14.200" fill="none" stroke="#d0d0d0" stroke-width="1.1"/><rect x="3.400" y="10.200" width="3.400" height="3.600" fill="#d0d0d0"/></svg>
<span class="t" style="left:854.5px;top:523.5px;letter-spacing:0.038px;">Lang.cs</span>
<svg style="left:827px;top:527.8px" width="5.3" height="7.3" viewBox="0 0 5.3 7.3"><path d="M0.75 2.5 a1.9 1.85 0 0 1 3.8 0" fill="none" stroke="#2eb1f0" stroke-width="1.3"/><rect x="0" y="3" width="5.3" height="4.3" fill="#2eb1f0"/><rect x="1.95" y="4.2" width="1.4" height="1.9" fill="#252526"/></svg>
<svg style="left:834px;top:523.5px" width="16" height="16" viewBox="0 0 16 16"><text x="1.6" y="9.7" font-size="9.8" font-weight="bold" fill="#8ae28a" stroke="#8ae28a" stroke-width=".7" font-family="Liberation Sans,sans-serif" textLength="6.2" lengthAdjust="spacingAndGlyphs">C</text><text x="8.2" y="8" font-size="7.4" font-weight="bold" fill="#8ae28a" stroke="#8ae28a" stroke-width=".35" font-family="Liberation Sans,sans-serif" textLength="4.800" lengthAdjust="spacingAndGlyphs">#</text></svg>
<svg style="left:814px;top:524.8px" width="6" height="11" viewBox="0 0 6 11"><path d="M0.55 1.5 L4.6 5.35 L0.55 9.2 Z" fill="none" stroke="#f1f1f1" stroke-width="1.1"/></svg>
<span class="t" style="left:854.5px;top:542.5px;letter-spacing:0.404px;">Program.cs</span>
<svg style="left:827px;top:546.8px" width="5.3" height="7.3" viewBox="0 0 5.3 7.3"><path d="M0.75 2.5 a1.9 1.85 0 0 1 3.8 0" fill="none" stroke="#2eb1f0" stroke-width="1.3"/><rect x="0" y="3" width="5.3" height="4.3" fill="#2eb1f0"/><rect x="1.95" y="4.2" width="1.4" height="1.9" fill="#252526"/></svg>
<svg style="left:834px;top:542.5px" width="16" height="16" viewBox="0 0 16 16"><text x="1.6" y="9.7" font-size="9.8" font-weight="bold" fill="#8ae28a" stroke="#8ae28a" stroke-width=".7" font-family="Liberation Sans,sans-serif" textLength="6.2" lengthAdjust="spacingAndGlyphs">C</text><text x="8.2" y="8" font-size="7.4" font-weight="bold" fill="#8ae28a" stroke="#8ae28a" stroke-width=".35" font-family="Liberation Sans,sans-serif" textLength="4.800" lengthAdjust="spacingAndGlyphs">#</text></svg>
<svg style="left:814px;top:543.8px" width="6" height="11" viewBox="0 0 6 11"><path d="M0.55 1.5 L4.6 5.35 L0.55 9.2 Z" fill="none" stroke="#f1f1f1" stroke-width="1.1"/></svg>
<span class="t" style="left:854.5px;top:561.5px;letter-spacing:0.247px;">Startup.cs</span>
<svg style="left:827px;top:565.8px" width="5.3" height="7.3" viewBox="0 0 5.3 7.3"><path d="M0.75 2.5 a1.9 1.85 0 0 1 3.8 0" fill="none" stroke="#2eb1f0" stroke-width="1.3"/><rect x="0" y="3" width="5.3" height="4.3" fill="#2eb1f0"/><rect x="1.95" y="4.2" width="1.4" height="1.9" fill="#252526"/></svg>
<svg style="left:834px;top:561.5px" width="16" height="16" viewBox="0 0 16 16"><text x="1.6" y="9.7" font-size="9.8" font-weight="bold" fill="#8ae28a" stroke="#8ae28a" stroke-width=".7" font-family="Liberation Sans,sans-serif" textLength="6.2" lengthAdjust="spacingAndGlyphs">C</text><text x="8.2" y="8" font-size="7.4" font-weight="bold" fill="#8ae28a" stroke="#8ae28a" stroke-width=".35" font-family="Liberation Sans,sans-serif" textLength="4.800" lengthAdjust="spacingAndGlyphs">#</text></svg>
<svg style="left:814px;top:562.8px" width="6" height="11" viewBox="0 0 6 11"><path d="M0.55 1.5 L4.6 5.35 L0.55 9.2 Z" fill="none" stroke="#f1f1f1" stroke-width="1.1"/></svg>
<div class="vt" style="top:83px;height:24px">属性</div>
<div class="vb" style="top:83px;height:24px"></div>
<div class="vt" style="top:119px;height:44px">Git 更改</div>
<div class="vb" style="top:119px;height:44px"></div>
<div class="vt" style="top:174.5px;height:108.5px">解决方案资源管理器</div>
<div class="vb" style="top:174.5px;height:108.5px"></div>
<div class="vt" style="top:295px;height:84px">团队资源管理器</div>
<div class="vb" style="top:295px;height:84px"></div>
<div class="vt" style="top:391px;height:23px">通知</div>
<div class="vb" style="top:391px;height:23px"></div>
<span class="t" style="left:13px;top:763.5px;color:#d0d0d0">测试资源管理器</span>
<div class="bb" style="left:13px;width:84px"></div>
<span class="t" style="left:109px;top:763.5px;color:#d0d0d0">错误列表</span>
<div class="bb" style="left:109px;width:48px"></div>
<span class="t" style="left:169px;top:763.5px;letter-spacing:-0.008px;color:#d0d0d0">输出</span>
<div class="bb" style="left:169px;width:24px"></div>
<span class="t" style="left:205px;top:763.5px;color:#d0d0d0">异常设置</span>
<div class="bb" style="left:205px;width:48px"></div>
<span class="t" style="left:265px;top:763.5px;color:#d0d0d0">代码度量值结果</span>
<div class="bb" style="left:265px;width:84px"></div>
<span class="t" style="left:361px;top:763.5px;color:#d0d0d0">程序包管理器控制台</span>
<div class="bb" style="left:361px;width:108px"></div>
<span class="t" style="left:481px;top:763.5px;letter-spacing:0.393px;color:#d0d0d0">C# Interactive (.NET Framework 64 位)</span>
<div class="bb" style="left:481px;width:222px"></div>
<span class="t" style="left:715px;top:763.5px;letter-spacing:0.400px;color:#d0d0d0">Web 发布活动</span>
<div class="bb" style="left:715px;width:79px"></div>
<span class="t" style="left:806px;top:763.5px;color:#d0d0d0">任务运行程序资源管理器</span>
<div class="bb" style="left:806px;width:132px"></div>
<div class="a" style="left:7px;top:789px;width:1314px;height:24px;background:#007acc"></div>
<span class="t" style="left:35px;top:793.5px;letter-spacing:-0.008px;color:#fff">就绪</span>
<span class="t" style="left:1002px;top:793.5px;letter-spacing:0.312px;color:#fff">0</span>
<span class="t" style="left:1053.5px;top:793.5px;letter-spacing:0.312px;color:#fff">3</span>
<span class="t" style="left:1104px;top:793.5px;letter-spacing:0.331px;color:#fff">Furion</span>
<span class="t" style="left:1184.6px;top:793.5px;letter-spacing:0.385px;color:#fff">master</span>
<svg style="left:0px;top:0px" width="1321" height="817" viewBox="0 0 1321 817"><path d="M12.2 806.2 L15.4 796.4 H26.4 L23.2 806.2 Z" fill="none" stroke="#fff" stroke-width="1.1"/><path d="M988 806.8 V797 M984 800.6 L988 796.4 L992 800.6" stroke="#dcdcdc" stroke-width="1.6" fill="none"/><path d="M1034 806.4 l.9 -3.4 l6.4 -6.4 l2.5 2.5 l-6.4 6.4 z" fill="#c8c8c8"/><path d="M1042.2 795.7 l1 -1 l2.5 2.5 l-1 1 z" fill="#c8c8c8"/><path d="M1090 793.8 L1097.1 800.9 L1090 808 L1082.9 800.9 Z" fill="#dcdcdc"/><path d="M1088.6 797.4 L1091.4 800.2 M1090.2 798.8 v5.6" stroke="#007acc" stroke-width="1.1" fill="none"/><circle cx="1090.2" cy="804.6" r="1.1" fill="#007acc"/><circle cx="1092.2" cy="801" r="1.1" fill="#007acc"/><path d="M1170.2 807 v-5.2 M1170.2 801.8 L1164.4 795.4 M1170.2 801.8 L1176 795.4 M1163.4 797.6 v-3 h3 M1177 797.6 v-3 h-3" stroke="#c8c8c8" stroke-width="1.1" fill="none"/><path d="M1230 803.2 h8 l-4 -3.7 z" fill="#fff"/><path d="M1265.2 804.4 c2 -1.6 1.6 -4.4 2.2 -6.6 c.6 -2.2 1.8 -3.6 3.4 -3.6 s2.8 1.4 3.4 3.6 c.6 2.2 .2 5 2.2 6.6 z" fill="#c8c8c8"/><path d="M1269.2 805.6 h3.2 a1.6 1.6 0 0 1 -3.2 0z" fill="#c8c8c8"/><circle cx="1278.9" cy="804.9" r="5.800" fill="#e51400"/><text x="1276.2" y="808.6" font-size="10.500" fill="#fff" font-family="Liberation Sans,sans-serif">1</text><g fill="#a9d3f0"><rect x="1316" y="801" width="1" height="1"/><rect x="1316" y="803" width="1" height="1"/><rect x="1314" y="803" width="1" height="1"/><rect x="1316" y="805" width="1" height="1"/><rect x="1314" y="805" width="1" height="1"/><rect x="1312" y="805" width="1" height="1"/><rect x="1316" y="807" width="1" height="1"/><rect x="1314" y="807" width="1" height="1"/><rect x="1312" y="807" width="1" height="1"/><rect x="1310" y="807" width="1" height="1"/></g></svg>
<svg style="left:0px;top:0px" width="1321" height="817" viewBox="0 0 1321 817"><path d="M177.0 124.0 C175.6 124.1 172.3 124.5 168.3 124.8 C164.3 125.0 158.2 125.3 153.1 125.5 C148.0 125.7 143.0 125.8 138.0 126.0 C133.0 126.2 128.0 126.4 122.9 126.8 C117.9 127.2 112.1 127.7 107.7 128.2 C103.3 128.7 100.2 129.1 96.4 129.8 C92.6 130.5 88.2 131.5 85.0 132.3 C81.8 133.1 80.6 133.2 77.3 134.5 C74.0 135.8 68.7 138.1 65.1 139.8 C61.5 141.5 59.1 142.8 55.9 144.7 C52.7 146.6 49.2 149.2 46.1 151.4 C43.0 153.7 40.5 155.6 37.5 158.2 C34.5 160.8 30.9 164.1 28.4 166.7 C25.8 169.2 23.9 171.3 22.2 173.5 C20.5 175.7 19.2 177.6 18.0 180.0 C16.8 182.4 15.8 185.5 15.2 188.0 C14.6 190.5 14.4 192.5 14.4 195.0 C14.4 197.5 14.4 200.4 15.0 203.0 C15.6 205.6 16.4 207.8 17.8 210.5 C19.2 213.2 20.7 216.5 23.2 219.3 C25.7 222.1 29.0 224.7 32.7 227.2 C36.4 229.7 40.2 232.1 45.4 234.5 C50.5 236.9 56.0 239.2 63.6 241.8 C71.2 244.4 81.7 247.6 90.8 250.0 C99.9 252.4 109.0 254.3 118.1 256.3 C127.2 258.3 136.2 260.1 145.3 261.8 C154.4 263.5 163.5 265.1 172.6 266.3 C181.7 267.5 190.8 268.3 199.9 269.0 C209.0 269.7 219.4 270.1 227.1 270.4 C234.8 270.6 239.0 270.7 246.0 270.5 C253.0 270.3 262.1 269.8 269.2 269.3 C276.3 268.8 282.2 268.1 288.7 267.3 C295.2 266.6 302.4 265.6 308.3 264.8 C314.2 264.0 317.9 263.5 324.4 262.4 C330.9 261.3 340.4 259.4 347.5 258.1 C354.6 256.8 360.5 255.6 367.0 254.4 C373.5 253.2 380.1 251.9 386.6 250.7 C393.1 249.5 399.7 248.2 406.2 247.0 C412.7 245.8 420.3 244.4 425.8 243.4 C431.3 242.4 435.9 241.7 439.4 240.8 C442.8 239.9 444.5 239.1 446.5 237.8 C448.5 236.5 449.4 235.5 451.2 233.0 C453.0 230.5 455.1 226.9 457.1 222.9 C459.1 218.9 461.6 213.4 463.0 209.2 C464.4 204.9 465.3 202.0 465.3 197.4 C465.3 192.8 464.7 186.9 463.0 181.8 C461.3 176.8 458.7 171.7 455.1 167.1 C451.5 162.5 446.3 158.0 441.4 154.4 C436.5 150.8 431.7 148.1 425.8 145.6 C419.9 143.1 412.7 141.1 406.2 139.7 C399.7 138.3 393.1 137.5 386.6 137.1 C380.1 136.7 373.5 136.9 367.0 137.1 C360.5 137.3 354.0 137.8 347.5 138.3 C341.0 138.8 334.4 139.5 327.9 140.3 C321.4 141.1 314.8 142.0 308.3 143.0 C301.8 144.0 295.2 145.3 288.7 146.5 C282.2 147.7 275.7 148.9 269.2 150.4 C262.7 151.9 254.5 153.9 249.6 155.3 C244.7 156.7 243.3 157.7 240.0 158.6 C236.7 159.5 233.7 160.2 230.0 161.0 C226.3 161.8 223.0 163.8 218.0 163.7 C213.0 163.6 205.4 161.4 199.9 160.4 C194.4 159.4 189.7 158.6 185.0 157.7 C180.3 156.8 176.1 155.9 172.0 155.0 C167.9 154.1 164.3 153.1 160.7 152.0 C157.0 150.9 152.9 149.7 150.1 148.6 C147.3 147.5 146.0 146.6 144.0 145.2 C142.0 143.8 140.0 142.0 138.0 140.3 C136.0 138.6 133.7 136.2 131.9 135.0 C130.1 133.8 129.0 133.5 127.4 133.1 C125.8 132.7 123.0 132.4 122.1 132.3" fill="none" stroke="#8a0a1c" stroke-width="3.2" stroke-linecap="round" stroke-linejoin="round"/><path d="M890.0 389.8 C887.3 389.6 878.6 388.9 873.6 388.6 C868.6 388.3 864.9 388.0 860.0 388.0 C855.1 388.0 848.7 388.2 844.2 388.4 C839.7 388.5 835.7 388.7 833.0 388.9 C830.3 389.1 830.0 388.8 828.0 389.8 C826.0 390.8 822.9 392.9 820.7 394.8 C818.5 396.7 816.5 399.1 814.8 401.4 C813.1 403.7 811.3 406.6 810.4 408.8 C809.5 411.0 809.5 412.3 809.5 414.3 C809.5 416.3 809.8 418.6 810.4 421.0 C811.0 423.4 811.9 426.4 813.3 429.0 C814.6 431.6 816.6 434.2 818.5 436.4 C820.4 438.6 821.8 440.3 824.4 442.3 C827.0 444.3 831.3 447.0 833.9 448.5 C836.5 450.0 837.5 450.3 840.0 451.4 C842.5 452.5 846.1 453.9 849.1 455.0 C852.1 456.1 853.7 456.6 858.2 457.7 C862.7 458.8 870.2 460.2 876.3 461.3 C882.3 462.4 888.4 463.3 894.5 464.1 C900.6 464.9 906.7 465.7 912.7 466.3 C918.8 466.9 924.8 467.6 930.8 468.0 C936.8 468.4 942.6 468.7 949.0 468.6 C955.4 468.6 962.3 468.3 969.0 467.7 C975.7 467.1 982.6 466.4 989.4 465.2 C996.2 464.0 1004.2 462.3 1009.9 460.4 C1015.6 458.5 1020.7 456.1 1023.5 453.6 C1026.3 451.1 1026.9 448.1 1026.9 445.4 C1026.9 442.7 1025.7 440.1 1023.5 437.2 C1021.4 434.2 1017.9 430.8 1014.0 427.7 C1010.1 424.6 1005.5 421.5 1000.3 418.8 C995.1 416.1 989.0 413.5 982.6 411.3 C976.2 409.1 969.0 407.2 962.2 405.9 C955.4 404.6 948.6 403.8 941.8 403.4 C935.0 403.0 928.1 402.9 921.3 403.4 C914.5 403.9 907.2 405.3 900.9 406.6 C894.5 407.9 886.2 410.5 883.2 411.3" fill="none" stroke="#8a0a1c" stroke-width="3.2" stroke-linecap="round" stroke-linejoin="round"/></svg>
</body></html>
